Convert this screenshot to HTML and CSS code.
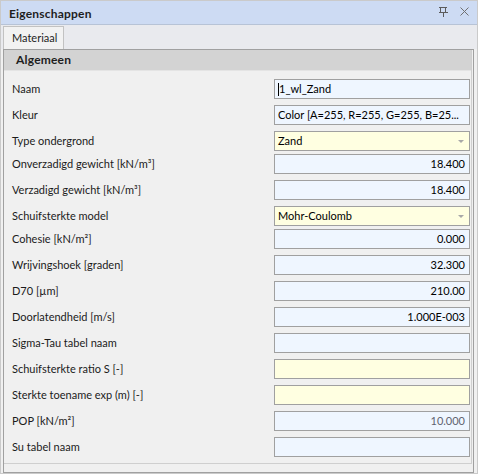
FILE: index.html
```html
<!DOCTYPE html>
<html lang="nl">
<head>
    <meta charset="UTF-8">
    <title>Eigenschappen</title>
    <link rel="stylesheet" href="styles.css">
</head>
<body>
    <div class="panel">
        <div class="titlebar">
            <span class="title">Eigenschappen</span>
            <div class="title-buttons">
                <svg class="pin" width="9" height="10" viewBox="0 0 9 10">
                    <rect x="0" y="0" width="8" height="1"/>
                    <rect x="1" y="1" width="1" height="4"/>
                    <rect x="6" y="1" width="1" height="4"/>
                    <rect x="0" y="5" width="9" height="1"/>
                    <rect x="4" y="6" width="1" height="4"/>
                </svg>
                <svg class="close" width="9" height="9" viewBox="0 0 9 9">
                    <path d="M0.5 0.5 L8.5 8.5 M8.5 0.5 L0.5 8.5"/>
                </svg>
            </div>
        </div>

        <div class="tabstrip">
            <div class="tab">Materiaal</div>
        </div>

        <div class="grid">
            <div class="grid-inner">
                <div class="category">Algemeen</div>
                <div class="rows">
                    <div class="row">
                        <span class="label">Naam</span>
                        <div class="field"><span class="caret"></span>1_wl_Zand</div>
                    </div>
                    <div class="row">
                        <span class="label">Kleur</span>
                        <div class="field">Color [A=255, R=255, G=255, B=25...</div>
                    </div>
                    <div class="row combo-row">
                        <span class="label">Type ondergrond</span>
                        <div class="field combo"><span>Zand</span><span class="arrow"></span></div>
                    </div>
                    <div class="row">
                        <span class="label">Onverzadigd gewicht [kN/m³]</span>
                        <div class="field number">18.400</div>
                    </div>
                    <div class="row">
                        <span class="label">Verzadigd gewicht [kN/m³]</span>
                        <div class="field number">18.400</div>
                    </div>
                    <div class="row combo-row">
                        <span class="label">Schuifsterkte model</span>
                        <div class="field combo"><span>Mohr-Coulomb</span><span class="arrow"></span></div>
                    </div>
                    <div class="row">
                        <span class="label">Cohesie [kN/m²]</span>
                        <div class="field number">0.000</div>
                    </div>
                    <div class="row">
                        <span class="label">Wrijvingshoek [graden]</span>
                        <div class="field number">32.300</div>
                    </div>
                    <div class="row">
                        <span class="label">D70 [µm]</span>
                        <div class="field number">210.00</div>
                    </div>
                    <div class="row">
                        <span class="label">Doorlatendheid [m/s]</span>
                        <div class="field number">1.000E-003</div>
                    </div>
                    <div class="row">
                        <span class="label">Sigma-Tau tabel naam</span>
                        <div class="field"></div>
                    </div>
                    <div class="row">
                        <span class="label">Schuifsterkte ratio S [-]</span>
                        <div class="field yellow"></div>
                    </div>
                    <div class="row">
                        <span class="label">Sterkte toename exp (m) [-]</span>
                        <div class="field yellow"></div>
                    </div>
                    <div class="row">
                        <span class="label">POP [kN/m²]</span>
                        <div class="field number readonly">10.000</div>
                    </div>
                    <div class="row">
                        <span class="label">Su tabel naam</span>
                        <div class="field"></div>
                    </div>
                </div>
            </div>
        </div>
    </div>
</body>
</html>
```

FILE: styles.css
```css
* {
    margin: 0;
    padding: 0;
    box-sizing: border-box;
}

body {
    background: #ffffff;
    font-family: Lato, "Noto Sans", sans-serif;
    font-size: 11px;
    color: #1b1b1b;
}

.panel {
    width: 478px;
    height: 474px;
    border: 1px solid #cacaca;
    background: #f0f0f0;
    display: flex;
    flex-direction: column;
}

/* title bar */
.titlebar {
    height: 24px;
    background: #cddbf3;
    border-bottom: 1px solid #b7c3d6;
    display: flex;
    align-items: center;
    justify-content: space-between;
    padding: 2px 8px 0 8px;
}

.title {
    font-size: 12px;
    font-weight: bold;
    color: #1e1e1e;
    letter-spacing: 0.2px;
}

.title-buttons {
    display: flex;
    align-items: flex-start;
    gap: 12px;
    margin-top: -4px;
}

.pin {
    fill: #5c5c5c;
}

.close {
    stroke: #707070;
    stroke-width: 1;
    fill: none;
}

/* tabs */
.tabstrip {
    height: 24px;
    background: #e9eaee;
    padding: 1px 0 0 2px;
    display: flex;
}

.tab {
    width: 61px;
    height: 23px;
    background: #f2f2f2;
    border: 1px solid #c2c2c2;
    border-bottom: none;
    padding-left: 8px;
    line-height: 22px;
    color: #1e1e1e;
}

/* property grid */
.grid {
    margin: 0 3px 0 2px;
    height: 424px;
    border: 1px solid #a0a0a0;
    background: #f0f0f0;
}

.grid-inner {
    width: 468px;
    height: 414px;
    border-right: 1px solid #cfcfcf;
    border-bottom: 1px solid #cfcfcf;
}

.category {
    height: 21px;
    background: #d3d3d3;
    border-bottom: 1px solid #e4e4e4;
    padding-left: 12px;
    line-height: 20px;
    font-size: 12px;
    font-weight: bold;
    color: #1e1e1e;
    letter-spacing: 0.2px;
}

.rows {
    padding: 8px 1px 0 8px;
}

.row {
    display: flex;
    align-items: flex-start;
    justify-content: space-between;
    height: 26px;
}

.row.combo-row {
    height: 23px;
}

.label {
    line-height: 20px;
    white-space: nowrap;
}

.field {
    width: 196px;
    height: 20px;
    border: 1px solid #a0a0a0;
    background: #eff6ff;
    padding: 0 4px 0 3px;
    line-height: 18px;
    color: #000;
    white-space: nowrap;
    overflow: hidden;
    display: flex;
    align-items: center;
}

.field.number {
    justify-content: flex-end;
}

.field.readonly {
    color: #5f6370;
}

.field.yellow,
.field.combo {
    background: #ffffe1;
}

.field.combo {
    justify-content: space-between;
    padding-right: 5px;
}

.arrow {
    width: 0;
    height: 0;
    border-left: 3px solid transparent;
    border-right: 3px solid transparent;
    border-top: 3px solid #a8a8a8;
}

.caret {
    width: 1px;
    height: 13px;
    background: #000;
}
```
